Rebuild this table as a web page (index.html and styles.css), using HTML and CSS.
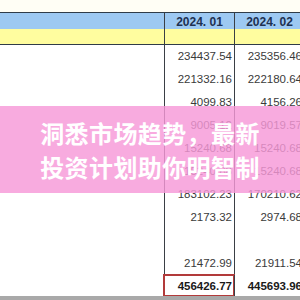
FILE: index.html
```html
<!DOCTYPE html>
<html lang="zh">
<head>
<meta charset="utf-8">
<link rel="stylesheet" href="styles.css">
</head>
<body>
<div class="sheet">
  <div class="top-strip"></div>
  <div class="head">
    <div class="row blue">
      <div class="cell label"></div>
      <div class="cell col">2024. 01</div>
      <div class="cell col">2024. 02</div>
    </div>
    <div class="row yellow">
      <div class="cell label"></div>
      <div class="cell col"></div>
      <div class="cell col"></div>
    </div>
  </div>
  <div class="body">
    <div class="row data"><div class="cell label"></div><div class="cell num">234437.54</div><div class="cell num">235356.46</div></div>
    <div class="row data"><div class="cell label"></div><div class="cell num">221332.16</div><div class="cell num">222180.64</div></div>
    <div class="row data"><div class="cell label"></div><div class="cell num">4099.83</div><div class="cell num">4156.26</div></div>
    <div class="row data"><div class="cell label"></div><div class="cell num">9005.12</div><div class="cell num">9019.57</div></div>
    <div class="row data"><div class="cell label"></div><div class="cell num">15240.68</div><div class="cell num">15240.68</div></div>
    <div class="row data"><div class="cell label"></div><div class="cell num">15240.68</div><div class="cell num">15240.68</div></div>
    <div class="row data"><div class="cell label"></div><div class="cell num">183102.23</div><div class="cell num">170210.62</div></div>
    <div class="row data"><div class="cell label"></div><div class="cell num">2173.32</div><div class="cell num">2974.68</div></div>
    <div class="row data"><div class="cell label"></div><div class="cell num"></div><div class="cell num"></div></div>
    <div class="row data"><div class="cell label"></div><div class="cell num">21472.99</div><div class="cell num">21911.54</div></div>
    <div class="row data total"><div class="cell label"></div><div class="cell num boxed">456426.77</div><div class="cell num">445693.96</div></div>
  </div>
  <div class="bottom-bar"></div>
  <div class="banner">
    <p class="banner-text">洞悉市场趋势，最新<br>投资计划助你明智制</p>
  </div>
</div>
</body>
</html>
```
FILE: styles.css
```css
html, body {
  margin: 0;
  padding: 0;
  background: #ffffff;
}
body {
  width: 300px;
  height: 300px;
  overflow: hidden;
}
.sheet {
  position: relative;
  width: 300px;
  height: 300px;
  display: flex;
  flex-direction: column;
  overflow: hidden;
  font-family: "Liberation Sans", Arial, sans-serif;
}
.top-strip {
  height: 12px;
  background: #fffef5;
  border-bottom: 1px solid #2f3c48;
  flex: none;
}
.head {
  flex: none;
  border-bottom: 1px solid #2f3c48;
}
.row {
  display: flex;
  width: 305px;
}
.cell {
  flex: none;
  box-sizing: border-box;
}
.cell.label {
  width: 164px;
}
.cell.col,
.cell.num {
  width: 70px;
  border-left: 1px solid #3a3f45;
}
.blue {
  height: 16px;
  background: #9dc9f2;
}
.yellow {
  height: 15px;
  background: #fffd9f;
}
.blue .col {
  font-family: "Liberation Sans", Arial, sans-serif;
  font-weight: bold;
  font-size: 12px;
  color: #1d3152;
  display: flex;
  align-items: center;
  justify-content: center;
  padding-top: 1px;
}
.body {
  flex: none;
}
.data {
  height: 23px;
}
.data.total {
  height: 21px;
}
.num {
  font-size: 11.5px;
  color: #3a3a3a;
  text-align: right;
  padding-right: 2px;
  line-height: 23px;
}
.total .num {
  font-weight: bold;
  color: #1a1a1a;
  line-height: 22px;
}
.boxed {
  outline: 2px solid #b23a3a;
  outline-offset: -1px;
}
.bottom-bar {
  flex: 1;
  background: #a9a9a9;
}
.banner {
  position: absolute;
  left: 0;
  top: 106px;
  width: 300px;
  height: 87px;
  background: rgba(246, 152, 216, 0.82);
  display: flex;
  align-items: center;
  justify-content: center;
}
.banner-text {
  margin: 0;
  color: #ffffff;
  font-family: "Noto Sans CJK SC", "Noto Sans", sans-serif;
  font-weight: bold;
  font-size: 24px;
  line-height: 34px;
  text-align: center;
  letter-spacing: 0.4px;
}
```
